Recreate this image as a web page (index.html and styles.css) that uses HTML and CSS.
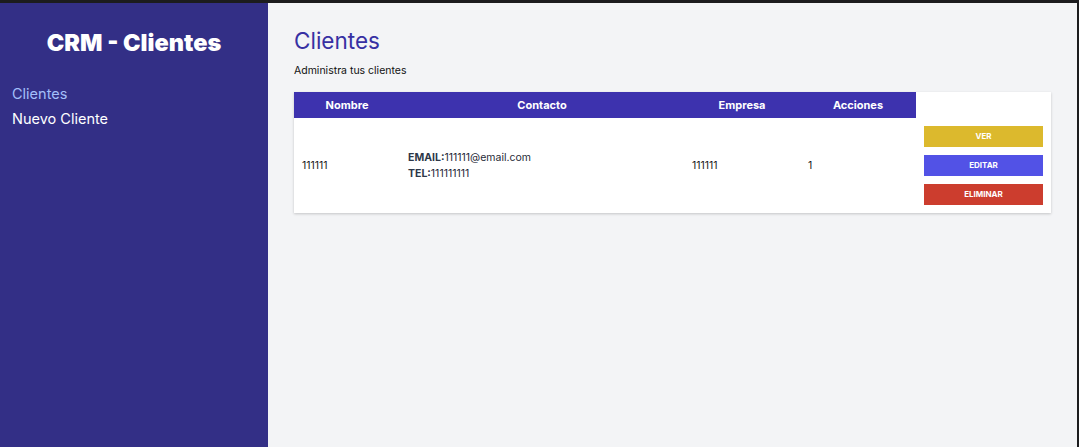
FILE: index.html
```html
<!DOCTYPE html>
<html lang="es">
<head>
<meta charset="utf-8">
<title>CRM - Clientes</title>
<link rel="stylesheet" href="styles.css">
</head>
<body>
<div class="app">
  <aside class="sidebar">
    <h2 class="brand">CRM - Clientes</h2>
    <nav class="nav">
      <a class="nav-link active" href="#">Clientes</a>
      <a class="nav-link" href="#">Nuevo Cliente</a>
    </nav>
  </aside>
  <main class="main">
    <h1 class="page-title">Clientes</h1>
    <p class="page-sub">Administra tus clientes</p>
    <div class="card">
      <table class="table">
        <colgroup>
          <col class="c1"><col class="c2"><col class="c3"><col class="c4"><col class="c5">
        </colgroup>
        <thead>
          <tr>
            <th>Nombre</th>
            <th>Contacto</th>
            <th>Empresa</th>
            <th>Acciones</th>
          </tr>
        </thead>
        <tbody>
          <tr>
            <td>111111</td>
            <td>
              <p class="contact"><b>EMAIL:</b>111111@email.com</p>
              <p class="contact"><b>TEL:</b>111111111</p>
            </td>
            <td>111111</td>
            <td>1</td>
            <td class="actions">
              <a class="btn btn-ver" href="#">Ver</a>
              <a class="btn btn-editar" href="#">Editar</a>
              <a class="btn btn-eliminar" href="#">Eliminar</a>
            </td>
          </tr>
        </tbody>
      </table>
    </div>
  </main>
</div>
</body>
</html>
```
FILE: styles.css
```css
* { box-sizing: border-box; }
html, body { height: 100%; }
body {
  margin: 0;
  font-family: Inter, "Noto Sans", sans-serif;
  background: #1c1c1e;
}
.app {
  display: flex;
  height: calc(100% - 3px);
  margin-top: 3px;
  margin-right: 2px;
  background: #f3f4f6;
}
.sidebar {
  width: 268px;
  flex: none;
  background: #332f86;
  padding: 0 12px;
}
.brand {
  margin: 26px 0 24px;
  text-align: center;
  color: #fff;
  font-size: 23.5px;
  line-height: 28px;
  font-weight: 900;
}
.nav { display: flex; flex-direction: column; }
.nav-link {
  color: #fff;
  text-decoration: none;
  font-size: 14.5px;
  line-height: 25px;
}
.nav-link.active { color: #a3bffa; }
.main {
  flex: 1;
  padding: 22px 26px 0;
}
.page-title {
  margin: 0;
  font-size: 22.5px;
  line-height: 32px;
  font-weight: 400;
  color: #3730a3;
}
.page-sub {
  margin: 6px 0 0;
  font-size: 10.5px;
  line-height: 16px;
  color: #111;
}
.card {
  margin-top: 13px;
  background: #fff;
  box-shadow: 0 1px 3px rgba(0,0,0,0.12), 0 1px 2px rgba(0,0,0,0.08);
}
.table {
  width: 100%;
  border-collapse: collapse;
  table-layout: fixed;
}
.c1 { width: 106px; }
.c2 { width: 284px; }
.c3 { width: 116px; }
.c4 { width: 116px; }
.c5 { width: 135px; }
.table th {
  background: #3d32ae;
  color: #fff;
  font-size: 11px;
  font-weight: 700;
  height: 26px;
  padding: 0 8px;
  text-align: center;
}
.table td {
  font-size: 10.5px;
  color: #1a1a1a;
  padding: 0 8px;
  vertical-align: middle;
}
.contact {
  margin: 0;
  line-height: 16px;
  color: #1f2937;
}
.contact b { font-weight: 700; color: #2d3748; }
.table td.actions {
  padding: 8px;
}
.btn {
  display: block;
  height: 21px;
  line-height: 21px;
  text-align: center;
  color: #fff;
  text-decoration: none;
  text-transform: uppercase;
  font-size: 8px;
  font-weight: 700;
}
.btn + .btn { margin-top: 8px; }
.btn-ver { background: #dcb92d; }
.btn-editar { background: #5252e6; }
.btn-eliminar { background: #cc3d2e; }
```
